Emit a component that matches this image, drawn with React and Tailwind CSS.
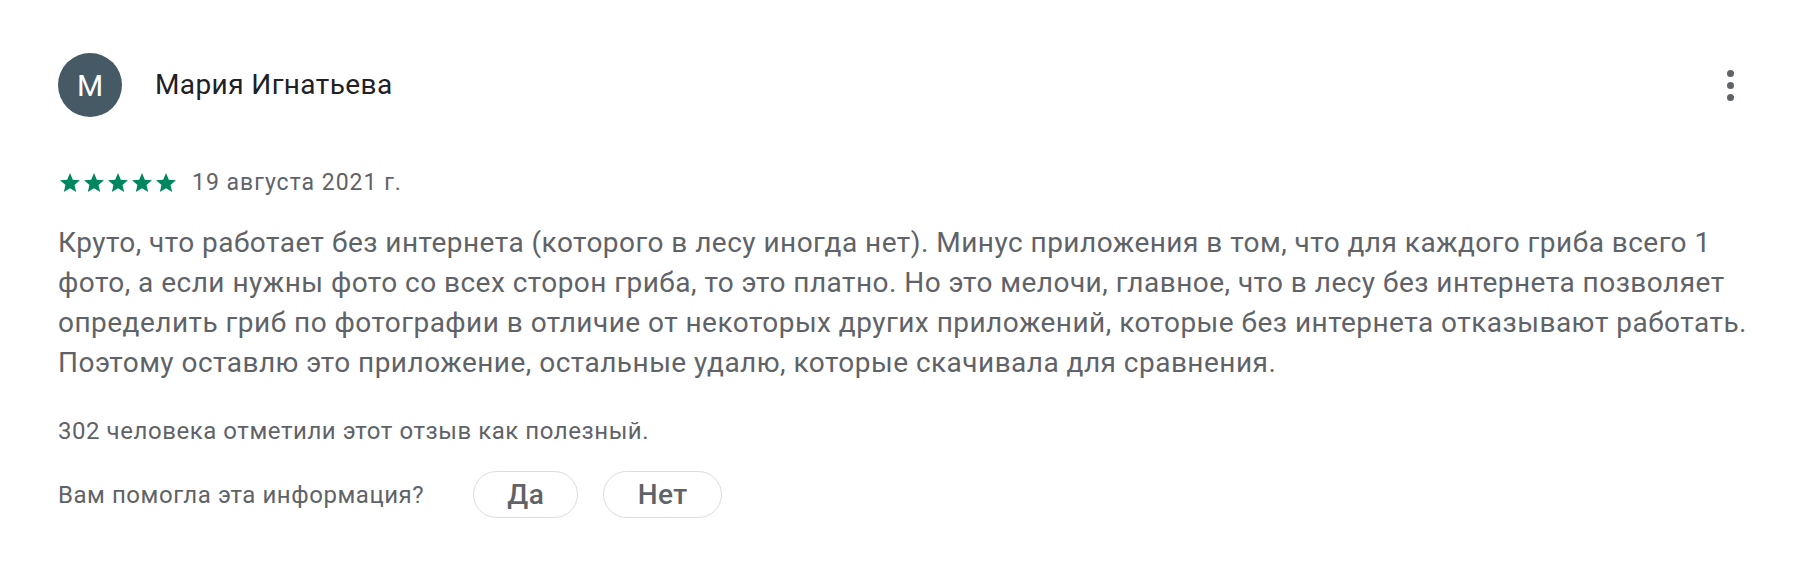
import React from "react";

const Star = () => (
  <svg width="24" height="24" viewBox="0 0 24 24" className="block">
    <path fill="#01875f" d="M12 17.27L18.18 21l-1.64-7.03L22 9.24l-7.19-.61L12 2 9.19 8.63 2 9.24l5.46 4.73L5.82 21z" />
  </svg>
);

export default function App() {
  const lines = [
    "Круто, что работает без интернета (которого в лесу иногда нет). Минус приложения в том, что для каждого гриба всего 1",
    "фото, а если нужны фото со всех сторон гриба, то это платно. Но это мелочи, главное, что в лесу без интернета позволяет",
    "определить гриб по фотографии в отличие от некоторых других приложений, которые без интернета отказывают работать.",
    "Поэтому оставлю это приложение, остальные удалю, которые скачивала для сравнения.",
  ];
  return (
    <div className="min-h-[582px] bg-white pl-[58px] pr-[54px] pt-[53px] font-['Roboto',sans-serif]">
      <div className="flex h-[64px] items-center">
        <div className="flex h-[64px] w-[64px] items-center justify-center rounded-full bg-[#455a64] text-[30px] text-white">
          M
        </div>
        <div className="ml-[33px] text-[28px] tracking-[0.4px] text-[#202124]">Мария Игнатьева</div>
        <div className="ml-auto flex w-[24px] flex-col items-center gap-[5px]">
          <span className="h-[7px] w-[7px] rounded-full bg-[#5f6368]" />
          <span className="h-[7px] w-[7px] rounded-full bg-[#5f6368]" />
          <span className="h-[7px] w-[7px] rounded-full bg-[#5f6368]" />
        </div>
      </div>
      <div className="mt-[54px] flex h-[24px] items-center">
        <div className="flex">
          <Star />
          <Star />
          <Star />
          <Star />
          <Star />
        </div>
        <span className="ml-[14px] text-[23px] tracking-[1px] text-[#5f6368]">19 августа 2021 г.</span>
      </div>
      <div className="mt-[28px] text-[28px] leading-[40px] tracking-[0.47px] text-[#5f6368]">
        {lines.map((l, i) => (
          <div key={i} className="whitespace-nowrap">{l}</div>
        ))}
      </div>
      <div className="mt-[36px] text-[24px] leading-[24px] tracking-[0.55px] text-[#5f6368]">
        302 человека отметили этот отзыв как полезный.
      </div>
      <div className="mt-[28px] flex h-[47px] items-center">
        <span className="text-[24px] tracking-[0.55px] text-[#5f6368]">Вам помогла эта информация?</span>
        <div className="ml-[49px] flex gap-[25px]">
          <button className="flex h-[47px] w-[105px] items-center justify-center rounded-full border border-[#dadce0] text-[28px] font-medium tracking-[0.5px] text-[#5f6368]">
            Да
          </button>
          <button className="flex h-[47px] w-[119px] items-center justify-center rounded-full border border-[#dadce0] text-[28px] font-medium tracking-[0.5px] text-[#5f6368]">
            Нет
          </button>
        </div>
      </div>
    </div>
  );
}
